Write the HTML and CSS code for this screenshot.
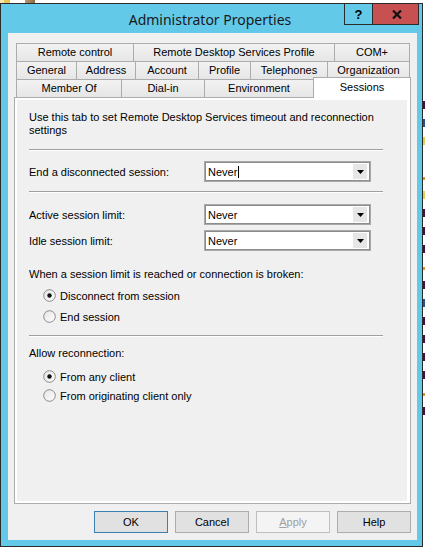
FILE: index.html
```html
<!DOCTYPE html>
<html>
<head>
<meta charset="utf-8">
<link rel="stylesheet" href="styles.css">
</head>
<body>
<div class="desk">
  <div class="left-col">
    <div class="top-strip"><span class="ico ico-a"></span><span class="ico ico-b"></span></div>
    <div class="window">
      <div class="titlebar">
        <div></div>
        <div class="title">Administrator Properties</div>
        <div class="controls">
          <div class="cbtn help-btn">?</div>
          <div class="cbtn close-btn">
            <svg width="10" height="9" viewBox="0 0 10 9"><path d="M1 0.5 L9 8.5 M9 0.5 L1 8.5" stroke="#111" stroke-width="2.2" fill="none"/></svg>
          </div>
        </div>
      </div>
      <div class="client">
        <div class="tabs">
          <div class="tabrow r1">
            <div class="tab">Remote control</div>
            <div class="tab">Remote Desktop Services Profile</div>
            <div class="tab last">COM+</div>
          </div>
          <div class="tabrow r2">
            <div class="tab">General</div>
            <div class="tab">Address</div>
            <div class="tab">Account</div>
            <div class="tab">Profile</div>
            <div class="tab">Telephones</div>
            <div class="tab last">Organization</div>
          </div>
          <div class="tabrow r3">
            <div class="tab">Member Of</div>
            <div class="tab">Dial-in</div>
            <div class="tab">Environment</div>
            <div class="tab selected">Sessions</div>
          </div>
        </div>
        <div class="panel">
          <div class="page">
            <p class="intro">Use this tab to set Remote Desktop Services timeout and reconnection settings</p>
            <div class="sep sep-1"></div>
            <div class="field-row row-end">
              <span>End a disconnected session:</span>
              <div class="combo"><span class="combo-text">Never</span><span class="caret"></span><span class="drop"><svg width="7" height="4" viewBox="0 0 7 4"><path d="M0 0 H7 L3.5 4 Z" fill="#000"/></svg></span></div>
            </div>
            <div class="sep sep-2"></div>
            <div class="field-row row-active">
              <span>Active session limit:</span>
              <div class="combo"><span class="combo-text">Never</span><span class="drop"><svg width="7" height="4" viewBox="0 0 7 4"><path d="M0 0 H7 L3.5 4 Z" fill="#000"/></svg></span></div>
            </div>
            <div class="field-row row-idle">
              <span>Idle session limit:</span>
              <div class="combo"><span class="combo-text">Never</span><span class="drop"><svg width="7" height="4" viewBox="0 0 7 4"><path d="M0 0 H7 L3.5 4 Z" fill="#000"/></svg></span></div>
            </div>
            <p class="label label-limit">When a session limit is reached or connection is broken:</p>
            <div class="radios radios-1">
              <div class="radio"><svg width="13" height="13" viewBox="0 0 13 13"><defs><linearGradient id="rg1" x1="0" y1="0" x2="1" y2="1"><stop offset="0" stop-color="#e4e4e4"/><stop offset="1" stop-color="#ffffff"/></linearGradient></defs><circle cx="6.5" cy="6.5" r="5.8" fill="url(#rg1)" stroke="#8a8a8a" stroke-width="1"/><circle cx="6.5" cy="6.5" r="2.2" fill="#111"/></svg><span>Disconnect from session</span></div>
              <div class="radio"><svg width="13" height="13" viewBox="0 0 13 13"><circle cx="6.5" cy="6.5" r="5.8" fill="url(#rg1)" stroke="#8a8a8a" stroke-width="1"/></svg><span>End session</span></div>
            </div>
            <div class="sep sep-3"></div>
            <p class="label label-allow">Allow reconnection:</p>
            <div class="radios radios-2">
              <div class="radio"><svg width="13" height="13" viewBox="0 0 13 13"><circle cx="6.5" cy="6.5" r="5.8" fill="url(#rg1)" stroke="#8a8a8a" stroke-width="1"/><circle cx="6.5" cy="6.5" r="2.2" fill="#111"/></svg><span>From any client</span></div>
              <div class="radio"><svg width="13" height="13" viewBox="0 0 13 13"><circle cx="6.5" cy="6.5" r="5.8" fill="url(#rg1)" stroke="#8a8a8a" stroke-width="1"/></svg><span>From originating client only</span></div>
            </div>
          </div>
        </div>
        <div class="buttons">
          <div class="btn default">OK</div>
          <div class="btn">Cancel</div>
          <div class="btn disabled"><u>A</u>pply</div>
          <div class="btn">Help</div>
        </div>
      </div>
    </div>
  </div>
  <div class="desk-right">
    <span class="dk m1"></span>
    <span class="dk b1"></span>
    <span class="dk y1"></span>
    <span class="dk e1"></span>
    <span class="dk o1"></span>
    <span class="dk y1"></span>
    <span class="dk m1"></span>
    <span class="dk m1"></span>
    <span class="dk m1"></span>
    <span class="dk o1"></span>
    <span class="dk m1"></span>
    <span class="dk b1"></span>
    <span class="dk m1"></span>
    <span class="dk m1"></span>
    <span class="dk m1"></span>
    <span class="dk m1"></span>
    <span class="dk o1"></span>
    <span class="dk m1"></span>
  </div>
</div>
</body>
</html>
```
FILE: styles.css
```css
html, body {
  margin: 0;
  padding: 0;
  background: #ffffff;
}
body {
  width: 427px;
  height: 548px;
  overflow: hidden;
  font-family: "Liberation Sans", Arial, sans-serif;
  font-size: 11px;
  color: #000;
}
.desk {
  display: flex;
  width: 427px;
  height: 548px;
}
.left-col {
  width: 423px;
  display: flex;
  flex-direction: column;
}
.top-strip {
  height: 3px;
  display: flex;
  gap: 15px;
  overflow: hidden;
}
.ico { display: block; width: 10px; height: 3px; }
.ico-a { background: linear-gradient(90deg, #f3e7b0 0 40%, #e7c653 40% 100%); }
.ico-b { background: linear-gradient(90deg, #b89a6c, #8c6a3e); }

.window {
  width: 423px;
  height: 544px;
  box-sizing: border-box;
  border: 1px solid #2b2b2b;
  background: #63c9e9;
  display: flex;
  flex-direction: column;
}
.titlebar {
  height: 29px;
  display: grid;
  grid-template-columns: 1fr auto 1fr;
  padding-right: 3px;
}
.title {
  font-family: "Noto Sans", "Open Sans", sans-serif;
  font-size: 14px;
  color: #1a1a1a;
  line-height: 29px;
  padding-top: 1px;
  white-space: nowrap;
}
.controls {
  justify-self: end;
  align-self: start;
  display: flex;
  border: 1px solid #2b2b2b;
  border-top: 0;
}
.cbtn {
  height: 20px;
  display: flex;
  align-items: center;
  justify-content: center;
}
.help-btn {
  width: 27px;
  border-right: 1px solid #2b2b2b;
  font-family: "Liberation Sans", Arial, sans-serif;
  font-weight: bold;
  font-size: 13px;
  color: #000;
  background: #63c9e9;
}
.close-btn {
  width: 45px;
  background: #c75050;
}
.close-btn svg { margin-left: 2px; margin-top: 1px; }

.client {
  margin-left: 7px;
  width: 409px;
  height: 507px;
  box-sizing: border-box;
  background: #f0f0f0;
  padding: 10px 6px 0 6px;
  display: flex;
  flex-direction: column;
}
.tabs {
  margin: 0 0 0 2px;
  width: 394px;
  display: flex;
  flex-direction: column;
  position: relative;
  z-index: 2;
}
.tabrow {
  display: grid;
  height: 18px;
}
.r1 { grid-template-columns: 117px 201px 76px; }
.r2 { grid-template-columns: 60px 59px 63px 52px 77px 83px; }
.r3 { grid-template-columns: 105px 83px 109px 97px; }
.tab {
  box-sizing: border-box;
  height: 18px;
  border-top: 1px solid #acacac;
  border-left: 1px solid #acacac;
  background: linear-gradient(#f2f2f2, #e6e6e6);
  text-align: center;
  line-height: 17px;
  white-space: nowrap;
}
.tab.last { border-right: 1px solid #acacac; }
.tab.selected {
  background: #ffffff;
  border-right: 1px solid #acacac;
  height: 21px;
  margin-top: -2px;
  margin-right: -1px;
  line-height: 18px;
  position: relative;
  z-index: 3;
}
.panel {
  box-sizing: border-box;
  width: 397px;
  height: 407px;
  border: 1px solid #acacac;
  background: #ffffff;
  padding: 2px 3px 2px 2px;
  position: relative;
  z-index: 1;
}
.page {
  height: 401px;
  background: #f0f0f0;
  padding: 0 24px 0 12px;
  display: flex;
  flex-direction: column;
}
.intro {
  margin: 11px 0 0 0;
  line-height: 13px;
  width: 354px;
}
.sep {
  height: 0;
  border-top: 1px solid #a0a0a0;
  border-bottom: 1px solid #ffffff;
  width: 354px;
}
.sep-1 { margin-top: 12px; }
.sep-2 { margin-top: 9px; }
.sep-3 { margin-top: 8px; }
.field-row {
  display: grid;
  grid-template-columns: 175px 167px;
  align-items: center;
  height: 21px;
}
.row-end { margin-top: 10px; }
.row-active { margin-top: 11px; }
.row-idle { margin-top: 5px; }
.combo {
  box-sizing: border-box;
  height: 21px;
  border: 1px solid #a9a9a9;
  box-shadow: inset 0 0 0 1px #8c8c8c;
  background: #ffffff;
  display: flex;
  align-items: center;
  padding: 2px;
}
.combo-text {
  padding-left: 1px;
  font-size: 11px;
}
.caret {
  width: 1px;
  height: 12px;
  background: #000;
  margin-left: 1px;
}
.drop {
  margin-left: auto;
  width: 15px;
  height: 15px;
  box-sizing: border-box;
  background: #e6e6e6;
  border-left: 1px solid #ffffff;
  display: flex;
  align-items: center;
  justify-content: center;
  margin-right: 1px;
}
.label {
  margin: 0;
  line-height: 13px;
}
.label-limit { margin-top: 17px; }
.label-allow { margin-top: 10px; }
.radios {
  display: flex;
  flex-direction: column;
  padding-left: 14px;
}
.radios-1 { margin-top: 4px; }
.radios-1 .radio { height: 21px; }
.radios-2 { margin-top: 7px; }
.radios-2 .radio { height: 19px; }
.radio {
  display: flex;
  align-items: center;
  gap: 4px;
}
.radio svg { flex: none; }

.buttons {
  margin-top: 7px;
  display: flex;
  justify-content: flex-end;
  gap: 7px;
  width: 397px;
}
.btn {
  box-sizing: border-box;
  width: 74px;
  height: 22px;
  border: 1px solid #adadad;
  background: #e1e1e1;
  display: flex;
  align-items: center;
  justify-content: center;
}
.btn.default { border-color: #3c7fb1; }
.btn.disabled {
  border-color: #bfbfbf;
  background: #f4f4f4;
  color: #a0a0a0;
}

.desk-right {
  width: 4px;
  overflow: hidden;
  display: flex;
  flex-direction: column;
  padding-top: 99px;
  margin-left: 0;
}
.dk {
  display: block;
  height: 18px;
  position: relative;
}
.dk::before {
  content: "";
  display: block;
  width: 2px;
  height: 8px;
  margin-top: 2px;
}
.m1::before { background: #4a0f3e; }
.b1::before { background: #2a4f8a; }
.y1::before { background: #e6cc55; }
.o1::before { background: #e09030; height: 3px; margin-top: 6px; }
.e1::before { background: transparent; }
```
